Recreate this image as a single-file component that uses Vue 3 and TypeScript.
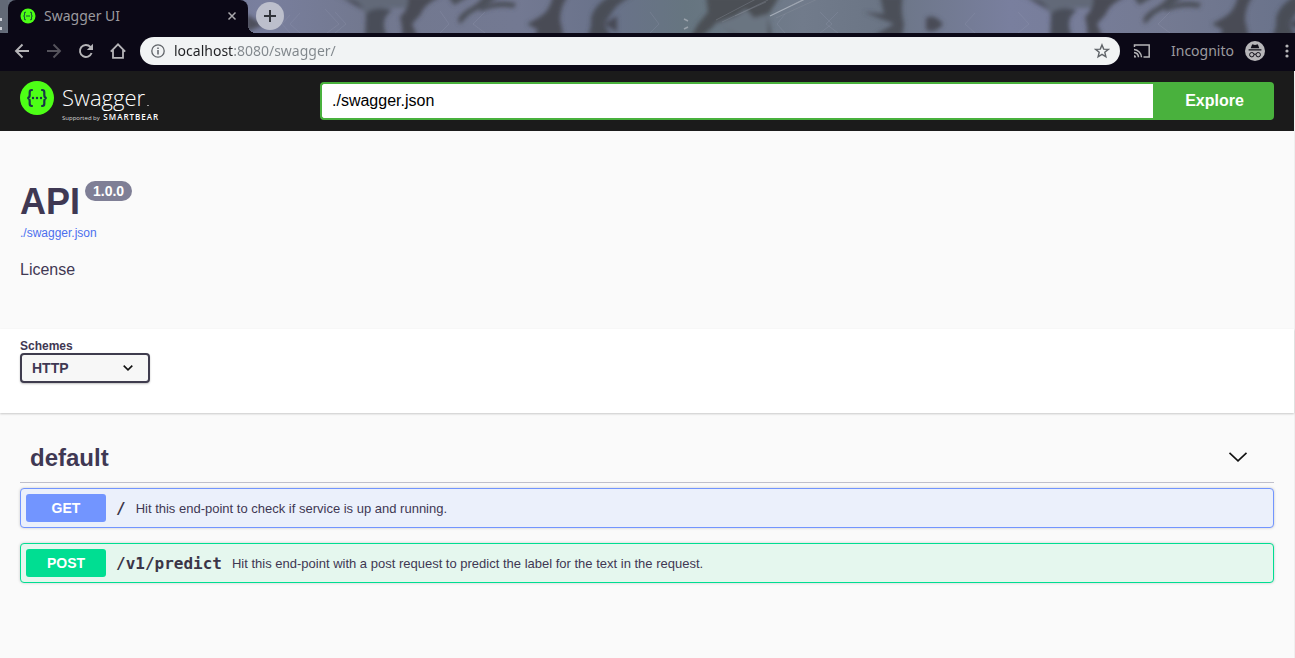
<script setup lang="ts">
import { ref } from 'vue'

interface Operation {
  method: 'get' | 'post'
  path: string
  summary: string
}

const address = ref('localhost:8080/swagger/')
const specUrl = ref('./swagger.json')
const scheme = ref('HTTP')
const open = ref(true)

const operations: Operation[] = [
  { method: 'get', path: '/', summary: 'Hit this end-point to check if service is up and running.' },
  {
    method: 'post',
    path: '/v1/predict',
    summary: 'Hit this end-point with a post request to predict the label for the text in the request.',
  },
]
</script>

<template>
  <div class="browser">
    <div class="tabstrip">
      <svg class="theme" viewBox="0 0 1295 33" preserveAspectRatio="none" aria-hidden="true">
        <defs>
          <filter id="soft" x="-5%" y="-20%" width="110%" height="140%"><feGaussianBlur stdDeviation="2" /></filter>
          <linearGradient id="sky" x1="0" x2="1">
            <stop offset="0" stop-color="#666e7c" />
            <stop offset=".2" stop-color="#797f9e" />
            <stop offset=".28" stop-color="#72788f" />
            <stop offset=".4" stop-color="#737992" />
            <stop offset=".47" stop-color="#69728a" />
            <stop offset=".53" stop-color="#667580" />
            <stop offset=".62" stop-color="#717b8b" />
            <stop offset=".68" stop-color="#6b7585" />
            <stop offset=".78" stop-color="#797f9e" />
            <stop offset=".9" stop-color="#747a92" />
            <stop offset="1" stop-color="#69728a" />
          </linearGradient>
          <g id="waves">
            <path d="M336 -4L430 -4L408 8L384 8L366 14Q358 3 336 -4Z" fill="#626978" />
            <path d="M343 -2Q358 -1 364 10Q352 4 343 -2Z" fill="#484c58" />
            <path d="M366 13Q376 6 392 10Q384 16 384 24Q384 31 388 38H365Z" fill="#4a4e59" />
            <path d="M408 -4H442Q424 4 421 14L412 24L418 38H402Q403 28 400 17Q410 8 408 -4Z" fill="#484b55" />
            <path d="M448 -4H470L454 5ZM484 -4H500Q482 8 470 14L460 24Q454 18 468 9Q478 4 484 -4Z" fill="#4b4f59" />
            <path d="M480 9Q494 -2 516 3L514 8Q496 5 480 12Z" fill="#4b4f59" />
            <path d="M553 -4H568Q560 7 560 20L564 38H533L538 30L527 24L538 18Q550 12 553 -4Z" fill="#484c55" />
            <path d="M610 -4H632Q616 4 611 14L604 24L612 38H586Q592 30 591 18Q594 5 610 -4Z" fill="#494d57" />
            <path d="M604 24L617 16V32Z" fill="#464a55" />
          </g>
        </defs>
        <rect width="1295" height="33" fill="url(#sky)" />
        <g filter="url(#soft)">
          <path d="M246 14L264 25L246 32Z" fill="#4d505b" />
          <use href="#waves" />
          <use href="#waves" x="685" />
          <path d="M706 -4H780L768 15L772 38H740L716 24L700 38H690L698 24L708 12Z" fill="#4b4f54" />
          <path d="M714 24L736 16L746 9L754 18L768 14V38H744Z" fill="#6b7581" />
          <path d="M864 12L884 14L880 -4H903Q900 10 904 24L902 38H870L894 24Z" fill="#4b4f59" />
          <path d="M926 18Q934 13 943 24Q936 34 926 30Z" fill="#484c57" />
        </g>
        <path d="M770 16L805 -1" fill="none" stroke="#b3b9c3" stroke-width="1.200" opacity=".8" />
        <path d="M776 18L822 -3M716 20L756 -1M722 22L768 0M790 6L806 -2M735 16L766 2" fill="none" stroke="#8b939e" opacity=".35" />
        <g fill="none" stroke="#9ea4bc" stroke-width="1" opacity=".2">
          <path d="M290 15l-8 9 8 9M300 13l-10 11 10 9M335 12l11 12-11 9M325 9l14 15-12 9M440 11l9 13-9 9M485 12l-12 12 12 9M785 14l-8 10 8 9M820 12l12 12-12 9M838 12l-12 12 12 9M975 13l-10 11 10 9M1018 12l11 12-11 9M1170 12l-12 12 12 9M650 12l9 12-9 9" />
        </g>
        <path d="M684 19l4 2M684 29l4-2" stroke="#99a1aa" stroke-width="1.500" />
        <path d="M0 0H8V28Q7 33 0 33Z" fill="#626976" />
        <path d="M0 18h2v3H0zM0 27h2v3H0z" fill="#cdd0d8" />
      </svg>
      <div class="tab">
        <svg class="favicon" viewBox="0 0 16 16" aria-hidden="true">
          <circle cx="8" cy="8" r="7.500" fill="#4dff16" />
          <path d="M6 4.200H5.300Q4.500 4.200 4.500 5V6.800Q4.500 8 3.400 8Q4.500 8 4.500 9.200V11Q4.500 11.800 5.300 11.800H6M10 4.200H10.700Q11.500 4.200 11.500 5V6.800Q11.500 8 12.600 8Q11.500 8 11.500 9.200V11Q11.500 11.800 10.700 11.800H10M6 8H10" fill="none" stroke="#17563a" stroke-width="1.100" />
        </svg>
        <span class="tab-title">Swagger UI</span>
        <button class="icon-btn tab-close" aria-label="Close tab">
          <svg viewBox="0 0 10 10" width="10" height="10"><path d="M1.500 1.500L8.500 8.500M8.500 1.500L1.500 8.500" stroke="#aaa9ad" stroke-width="1.500" /></svg>
        </button>
      </div>
      <button class="new-tab" aria-label="New tab">
        <svg viewBox="0 0 12 12" width="12" height="12"><path d="M6 0V12M0 6H12" stroke="#30333a" stroke-width="2" /></svg>
      </button>
    </div>

    <div class="toolbar">
      <button class="icon-btn nav" aria-label="Back">
        <svg viewBox="0 0 16 16"><path d="M15 8H2M8.500 1.500L2 8L8.500 14.500" fill="none" stroke="#b6b5b8" stroke-width="1.900" /></svg>
      </button>
      <button class="icon-btn nav" aria-label="Forward">
        <svg viewBox="0 0 16 16"><path d="M1 8H14M7.500 1.500L14 8L7.500 14.500" fill="none" stroke="#55535c" stroke-width="1.900" /></svg>
      </button>
      <button class="icon-btn nav" aria-label="Reload">
        <svg viewBox="0 0 16 16"><path d="M13.600 10A6 6 0 1 1 12.400 3.900L13.500 5" fill="none" stroke="#b6b5b8" stroke-width="1.900" /><path d="M15 .8V7H8.800Z" fill="#b6b5b8" /></svg>
      </button>
      <button class="icon-btn nav" aria-label="Home">
        <svg viewBox="0 0 16 16"><path d="M.8 8.700L8 1.400L15.200 8.700M3 7V14.900H13V7" fill="none" stroke="#b6b5b8" stroke-width="1.800" /></svg>
      </button>
      <div class="omnibox">
        <svg class="info-icon" viewBox="0 0 14 14" aria-hidden="true"><circle cx="7" cy="7" r="6.200" fill="none" stroke="#5f6368" stroke-width="1.300" /><path d="M7 6V10.500M7 3.400V4.900" stroke="#5f6368" stroke-width="1.500" /></svg>
        <input v-model="address" class="address" type="text" aria-label="Address" />
        <button class="icon-btn star" aria-label="Bookmark this page">
          <svg viewBox="0 0 16 16"><path d="M8 1.900L9.700 6.100L14.300 6.400L10.800 9.300L11.900 13.800L8 11.400L4.100 13.800L5.200 9.300L1.700 6.400L6.300 6.100Z" fill="none" stroke="#5f6368" stroke-width="1.400" /></svg>
        </button>
      </div>
      <button class="icon-btn cast" aria-label="Cast">
        <svg viewBox="0 0 18 16"><path d="M1.500 4V1.900H16.200V13.900H10.500M1 6.500A8 8 0 0 1 8.500 14.200M1 9.500A5 5 0 0 1 5.500 14.200" fill="none" stroke="#b6b5b8" stroke-width="1.500" /><path d="M1 12A2.500 2.500 0 0 1 3.200 14.500H1Z" fill="#b6b5b8" /></svg>
      </button>
      <div class="incognito">
        <span>Incognito</span>
        <svg viewBox="0 0 20 20" aria-hidden="true">
          <circle cx="10" cy="10" r="10" fill="#b7b6b9" />
          <path d="M3.600 8.300H16.400V9.500H3.600ZM5.700 7.300L7 3.700Q7.300 3.200 8 3.400L10 3.900L12 3.400Q12.700 3.200 13 3.700L14.300 7.300Z" fill="#12101a" />
          <g fill="none" stroke="#12101a"><circle cx="6.800" cy="13.700" r="2.200" /><circle cx="13.200" cy="13.700" r="2.200" /><path d="M9 13.400Q10 12.600 11 13.400" /></g>
        </svg>
      </div>
      <button class="icon-btn menu" aria-label="Menu">
        <svg viewBox="0 0 4 16"><g fill="#b6b5b8"><circle cx="2" cy="3" r="1.600" /><circle cx="2" cy="8" r="1.600" /><circle cx="2" cy="13" r="1.600" /></g></svg>
      </button>
    </div>
  </div>

  <div class="page">
    <header class="topbar">
      <a class="brand" href="#">
        <svg class="brand-mark" viewBox="0 0 34 34" aria-hidden="true">
          <circle cx="17" cy="17" r="17" fill="#4dff16" />
          <path d="M12.800 9H11.800Q9.700 9 9.700 11.200V13.900Q9.700 16.900 7.300 17Q9.700 17.100 9.700 20.100V22.800Q9.700 25 11.800 25H12.800M21.200 9H22.200Q24.300 9 24.300 11.200V13.900Q24.300 16.900 26.700 17Q24.300 17.100 24.300 20.100V22.800Q24.300 25 22.200 25H21.200" fill="none" stroke="#173647" stroke-width="2.200" />
          <g fill="#173647"><circle cx="13" cy="17" r="1.200" /><circle cx="17" cy="17" r="1.200" /><circle cx="21" cy="17" r="1.200" /></g>
        </svg>
        <span class="brand-text">
          <span class="brand-name">Swagger<i class="brand-dot"></i></span>
          <span class="brand-by">Supported by <b>SMARTBEAR</b></span>
        </span>
      </a>
      <form class="spec-form" @submit.prevent>
        <input v-model="specUrl" type="text" aria-label="Definition URL" />
        <button type="submit">Explore</button>
      </form>
    </header>

    <section class="info">
      <h1>API <span class="version">1.0.0</span></h1>
      <a class="spec-link" href="#">./swagger.json</a>
      <p>License</p>
    </section>

    <section class="schemes">
      <label for="scheme">Schemes</label>
      <div class="select-wrap">
        <select id="scheme" v-model="scheme">
          <option>HTTP</option>
        </select>
        <svg viewBox="0 0 10 6" aria-hidden="true"><path d="M.7 .7L5 4.800L9.300 .7" fill="none" stroke="#111" stroke-width="1.600" /></svg>
      </div>
    </section>

    <main>
      <h2>
        <button class="tag" :aria-expanded="open" @click="open = !open">
          <span>default</span>
          <svg viewBox="0 0 20 12" aria-hidden="true"><path d="M1.500 .8L10 8.800L18.500 .8" fill="none" stroke="#111" stroke-width="1.600" /></svg>
        </button>
      </h2>
      <div v-if="open" class="operations">
        <button v-for="op in operations" :key="op.path" class="operation" :class="op.method">
          <span class="method">{{ op.method.toUpperCase() }}</span>
          <span class="path">{{ op.path }}</span>
          <span class="summary">{{ op.summary }}</span>
        </button>
      </div>
    </main>
  </div>
</template>

<style>
body {
  margin: 0;
  background: #fafafa;
}
#app {
  display: flex;
  flex-direction: column;
  min-height: 100vh;
}
</style>

<style scoped>
* {
  box-sizing: border-box;
}
button,
input,
select {
  margin: 0;
  font: inherit;
}
.browser {
  font-family: 'Noto Sans', 'Open Sans', sans-serif;
  background: #0b0816;
}
.tabstrip {
  position: relative;
  display: flex;
  height: 33px;
  padding-left: 8px;
}
.theme {
  position: absolute;
  inset: 0;
  width: 100%;
  height: 100%;
}
.tab {
  position: relative;
  display: flex;
  align-items: center;
  gap: 8px;
  width: 240px;
  padding: 0 11px 1px 12px;
  border-radius: 8px 8px 0 0;
  background: #0b0816;
  color: #9b9a9f;
  font-size: 14px;
}
.tab::after {
  content: '';
  position: absolute;
  left: 100%;
  bottom: 0;
  width: 8px;
  height: 8px;
  background: radial-gradient(circle at 100% 0, transparent 8px, #0b0816 8px);
}
.favicon {
  width: 16px;
  height: 16px;
}
.tab-title {
  flex: 1;
  line-height: 20px;
}
.icon-btn {
  display: flex;
  align-items: center;
  justify-content: center;
  padding: 0;
  border: 0;
  background: none;
  flex: none;
}
.new-tab {
  position: relative;
  display: flex;
  align-items: center;
  justify-content: center;
  width: 28px;
  height: 28px;
  margin: 2px 0 0 8px;
  padding: 0;
  border: 0;
  border-radius: 50%;
  background: #bcbfcc;
}
.toolbar {
  display: flex;
  align-items: center;
  gap: 16px;
  height: 38px;
  padding: 0 6px 2px 14px;
}
.nav svg,
.star svg {
  display: block;
  width: 16px;
  height: 16px;
}
.omnibox {
  display: flex;
  flex: 1;
  align-items: center;
  gap: 9px;
  height: 28px;
  margin-left: -2px;
  padding: 0 10px 0 11px;
  border-radius: 14px;
  background: #f1f3f4;
}
.info-icon {
  width: 14px;
  height: 14px;
}
.address {
  flex: 1;
  min-width: 0;
  padding: 0;
  border: 0;
  outline: 0;
  line-height: 20px;
  font-size: 14px;
  color: transparent;
  background: linear-gradient(90deg, #202124 59px, #80868b 59px);
  background-clip: text;
  -webkit-background-clip: text;
}
.cast {
  margin-left: -3px;
}
.cast svg {
  width: 18px;
  height: 16px;
}
.incognito {
  display: flex;
  align-items: center;
  gap: 11px;
  margin: 0 4px;
  color: #9b9a9f;
  font-size: 14px;
  line-height: 18px;
}
.incognito svg {
  width: 20px;
  height: 20px;
}
.menu svg {
  width: 4px;
  height: 16px;
}
.page {
  flex: 1;
  border-right: 1px solid #efefef;
  font-family: 'Liberation Sans', Arial, sans-serif;
  color: #3f3853;
}
.topbar {
  display: flex;
  align-items: center;
  height: 60px;
  padding: 0 20px;
  background: #1b1b1b;
}
.brand {
  display: flex;
  flex: none;
  gap: 8px;
  width: 300px;
  height: 40px;
  color: #fff;
  text-decoration: none;
  font-family: 'Open Sans', sans-serif;
}
.brand-mark {
  width: 34px;
  height: 34px;
}
.brand-text {
  display: flex;
  flex-direction: column;
}
.brand-name {
  font-size: 22px;
  font-weight: 300;
  line-height: 32px;
}
.brand-dot {
  display: inline-block;
  width: 2px;
  height: 1px;
  margin-left: 2px;
  background: #999;
}
.brand-by {
  font-size: 6px;
  line-height: 8px;
  color: #d8d8d8;
}
.brand-by b {
  margin-left: 2px;
  font-size: 8px;
  font-weight: 600;
  letter-spacing: 1px;
  color: #fff;
}
.spec-form {
  display: flex;
  flex: 1;
  height: 38px;
  font-size: 16px;
}
.spec-form input {
  flex: 1;
  min-width: 0;
  padding: 0 10px;
  border: 2px solid #49b13d;
  border-right: 0;
  border-radius: 4px 0 0 4px;
  outline: 0;
  background: #fff;
  color: #000;
}
.spec-form button {
  width: 121px;
  padding: 0 0 0 2px;
  border: 0;
  border-radius: 0 4px 4px 0;
  background: #49b13d;
  color: #fff;
  font-weight: 700;
}
.info {
  padding: 50px 20px 48px;
}
h1 {
  display: flex;
  align-items: flex-start;
  gap: 5px;
  margin: 0;
  font-size: 36px;
  line-height: 42px;
}
.version {
  padding: 0 8px;
  border-radius: 10px;
  background: #7f7f96;
  color: #fff;
  font-size: 14px;
  line-height: 20px;
}
.spec-link {
  display: block;
  line-height: 20px;
  font-size: 12px;
  color: #4b6fee;
  text-decoration: none;
}
.info p {
  margin: 16px 0 0;
  font-size: 16px;
  line-height: 22px;
}
.schemes {
  height: 84px;
  padding: 10px 20px;
  background: #fff;
  box-shadow: 0 1px 2px rgba(0, 0, 0, 0.2);
}
.schemes label {
  display: block;
  font-size: 12px;
  font-weight: 700;
  line-height: 14px;
}
.select-wrap {
  position: relative;
  width: 130px;
}
.select-wrap select {
  display: block;
  width: 100%;
  height: 30px;
  padding: 0 10px;
  border: 2px solid #3f3c4e;
  border-radius: 4px;
  background: #f7f7f7;
  box-shadow: 0 1px 2px rgba(0, 0, 0, 0.25);
  color: inherit;
  font-size: 14px;
  font-weight: 700;
  appearance: none;
}
.select-wrap svg {
  position: absolute;
  top: 12px;
  right: 17px;
  width: 10px;
  height: 6px;
  pointer-events: none;
}
main {
  padding: 20px;
}
h2 {
  margin: 0 0 5px;
}
.tag {
  display: flex;
  align-items: center;
  justify-content: space-between;
  width: 100%;
  height: 50px;
  padding: 0 26px 0 10px;
  border: 0;
  border-bottom: 1px solid #bfbfcb;
  background: none;
  color: inherit;
  font-size: 24px;
  font-weight: 700;
}
.tag svg {
  width: 20px;
  height: 12px;
}
.operations {
  display: flex;
  flex-direction: column;
  gap: 15px;
}
.operation {
  display: flex;
  align-items: center;
  width: 100%;
  height: 40px;
  padding: 0 5px;
  border: 1px solid;
  border-radius: 4px;
  box-shadow: 0 0 3px rgba(0, 0, 0, 0.2);
  text-align: left;
}
.get {
  border-color: #7295ff;
  background: #ebf0fb;
}
.post {
  border-color: #00de92;
  background: #e5f7ee;
}
.method {
  width: 80px;
  border-radius: 3px;
  color: #fff;
  font-size: 14px;
  font-weight: 700;
  line-height: 28px;
  text-align: center;
}
.get .method {
  background: #7295ff;
}
.post .method {
  background: #00de92;
}
.path {
  padding: 0 10px;
  color: #3b3547;
  font-family: 'DejaVu Sans Mono', monospace;
  font-size: 16px;
  font-weight: 700;
}
.summary {
  color: #3f3853;
  font-size: 13px;
}
</style>
